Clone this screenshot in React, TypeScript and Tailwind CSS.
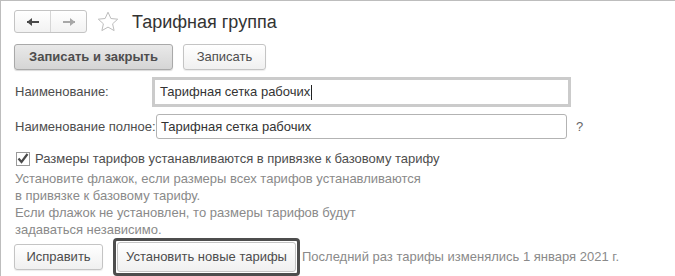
import * as React from "react";

function NavArrows() {
  return (
    <div className="flex h-[23px] w-[73px] rounded-[3px] border border-[#c4c4c4] bg-gradient-to-b from-white to-[#f2f2f2]">
      <div className="flex w-[36px] items-center justify-center border-r border-[#d6d6d6]">
        <svg width="14" height="10" viewBox="0 0 14 10">
          <path d="M1 5h12" stroke="#4a4a4a" strokeWidth="2" />
          <path d="M1 5l5-4v8z" fill="#4a4a4a" />
        </svg>
      </div>
      <div className="flex flex-1 items-center justify-center">
        <svg width="14" height="10" viewBox="0 0 14 10">
          <path d="M1 5h12" stroke="#a8a8a8" strokeWidth="2" />
          <path d="M13 5l-5-4v8z" fill="#a8a8a8" />
        </svg>
      </div>
    </div>
  );
}

function Star() {
  return (
    <svg width="22" height="21" viewBox="0 0 22 21">
      <path
        d="M11 1.2l2.9 6.3 6.8.7-5.1 4.6 1.5 6.8L11 16.1l-6.1 3.5 1.5-6.8L1.3 8.2l6.8-.7z"
        fill="none"
        stroke="#bdbdbd"
        strokeWidth="1"
        strokeLinejoin="round"
      />
    </svg>
  );
}

export default function App() {
  return (
    <div className="h-[276px] w-[675px] overflow-hidden border-l border-t border-[#bdbdbd] bg-white font-['Liberation_Sans',Arial,sans-serif] text-[13px] text-[#4d4d4d]">
      <div className="pl-[13px] pt-[9px]">
        <div className="flex items-center">
          <NavArrows />
          <div className="ml-[10px]">
            <Star />
          </div>
          <div className="ml-[13px] text-[18px] leading-none text-[#333]">Тарифная группа</div>
        </div>

        <div className="mt-[11px] flex gap-[10px]">
          <button className="h-[26px] w-[159px] rounded-[3px] border border-[#a9a9a9] bg-gradient-to-b from-[#e9e9e9] to-[#d5d5d5] text-[13px] font-bold text-[#4d4d4d] shadow-[0_1px_1px_rgba(0,0,0,0.15)]">
            Записать и закрыть
          </button>
          <button className="h-[26px] w-[83px] rounded-[3px] border border-[#c4c4c4] bg-gradient-to-b from-white to-[#f0f0f0] text-[13px] text-[#4d4d4d] shadow-[0_1px_1px_rgba(0,0,0,0.08)]">
            Записать
          </button>
        </div>

        <div className="mt-[7px] flex items-center">
          <div className="w-[138px] pl-[1px]">Наименование:</div>
          <div className="flex h-[30px] w-[419px] items-center border-[3px] border-[#cbcbcb] pl-[5px] text-[#333]">
            <span>Тарифная сетка рабочих</span>
            <span className="ml-[1px] h-[15px] w-[1px] bg-[#222]" />
          </div>
        </div>

        <div className="mt-[7px] flex items-center">
          <div className="w-[142px] pl-[1px]">Наименование полное:</div>
          <div className="flex h-[25px] w-[411px] items-center rounded-[3px] border border-[#b3b3b3] pl-[4px] text-[#333]">
            Тарифная сетка рабочих
          </div>
          <div className="ml-[9px] text-[#666]">?</div>
        </div>

        <div className="mt-[10px] flex items-center">
          <div className="ml-[2px] flex h-[14px] w-[14px] items-center justify-center border border-[#9a9a9a] bg-white">
            <svg width="12" height="11" viewBox="0 0 12 11">
              <path d="M1.5 5.5l3 3.5 6-8" fill="none" stroke="#4a4a4a" strokeWidth="2.2" />
            </svg>
          </div>
          <div className="ml-[5px]">Размеры тарифов устанавливаются в привязке к базовому тарифу</div>
        </div>

        <div className="mt-[1px] pl-[1px] leading-[17px] text-[#8a8a8a]">
          <div>Установите флажок, если размеры всех тарифов устанавливаются</div>
          <div>в привязке к базовому тарифу.</div>
          <div>Если флажок не установлен, то размеры тарифов будут</div>
          <div>задаваться независимо.</div>
        </div>

        <div className="mt-[0px] flex items-center">
          <button className="h-[26px] w-[89px] rounded-[3px] border border-[#c4c4c4] bg-gradient-to-b from-white to-[#f0f0f0] text-[#4d4d4d] shadow-[0_1px_1px_rgba(0,0,0,0.08)]">
            Исправить
          </button>
          <div className="ml-[10px] rounded-[4px] border-[3px] border-[#4d4d4d] p-[1px]">
            <button className="h-[30px] w-[179px] rounded-[3px] border border-[#c4c4c4] bg-gradient-to-b from-white to-[#f0f0f0] text-[#4d4d4d]">
              Установить новые тарифы
            </button>
          </div>
          <div className="ml-[2px] text-[#8a8a8a]">Последний раз тарифы изменялись 1 января 2021 г.</div>
        </div>
      </div>
    </div>
  );
}
